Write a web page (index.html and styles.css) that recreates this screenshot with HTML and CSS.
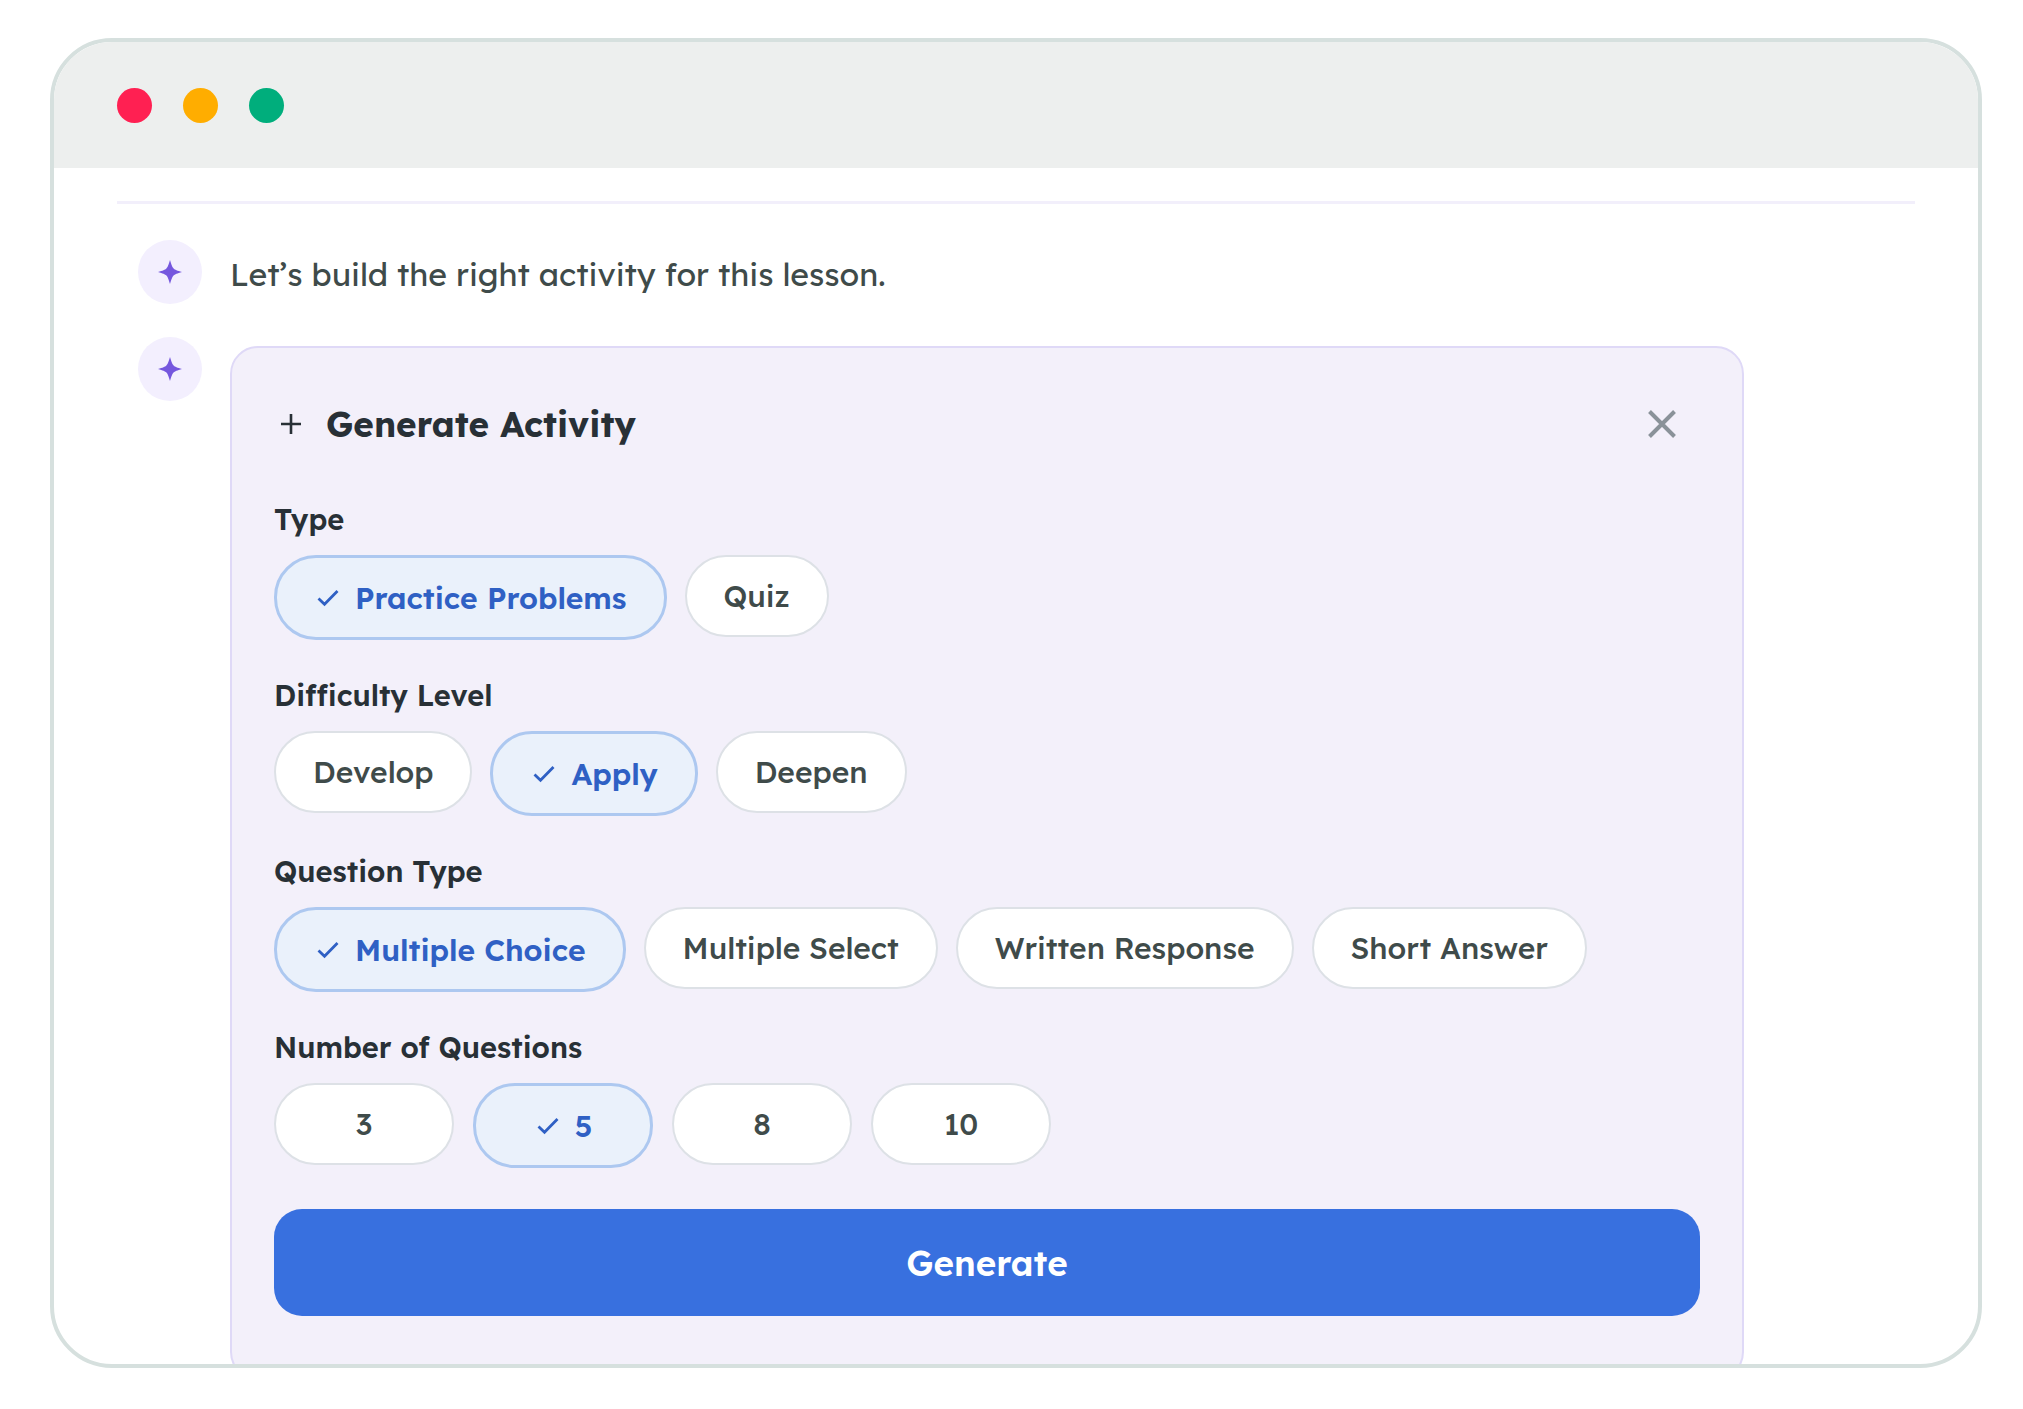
FILE: index.html
```
<!DOCTYPE html>
<html lang="en">
<head>
<meta charset="UTF-8">
<meta name="viewport" content="width=device-width, initial-scale=1">
<title>Generate Activity</title>
<link rel="stylesheet" href="styles.css">
</head>
<body>
<svg width="0" height="0" class="sprite" aria-hidden="true">
  <symbol id="spark" viewBox="0 0 22 22"><path d="M11 0C12.400 4.500 13 6.400 14.300 7.700C15.600 9 17.500 9.600 22 11C17.500 12.400 15.600 13 14.300 14.300C13 15.600 12.400 17.500 11 22C9.600 17.500 9 15.600 7.700 14.300C6.400 13 4.500 12.400 0 11C4.500 9.600 6.400 9 7.700 7.700C9 6.400 9.600 4.500 11 0Z" fill="currentColor"/></symbol>
  <symbol id="check" viewBox="0 0 22 18"><path d="M1.500 9.500L7.500 15.200L20.500 2" fill="none" stroke="currentColor" stroke-width="2.800"/></symbol>
</svg>

<div class="window">
  <div class="titlebar">
    <span class="dot red"></span>
    <span class="dot yellow"></span>
    <span class="dot green"></span>
  </div>

  <main class="chat">
    <div class="message">
      <span class="avatar"><svg class="spark"><use href="#spark"/></svg></span>
      <p class="text">Let’s build the right activity for this lesson.</p>
    </div>

    <div class="message">
      <span class="avatar"><svg class="spark"><use href="#spark"/></svg></span>
      <form class="card">
        <header class="card-head">
          <svg class="plus" viewBox="0 0 20 20" aria-hidden="true"><path d="M10 0V20M0 10H20" stroke="currentColor" stroke-width="2.600"/></svg>
          <h1>Generate Activity</h1>
          <button type="button" class="close" aria-label="Close"><svg viewBox="0 0 28 28"><path d="M1.500 1.500L26.500 26.500M26.500 1.500L1.500 26.500" stroke="currentColor" stroke-width="4"/></svg></button>
        </header>

        <div class="group" role="group" aria-labelledby="type">
          <h2 id="type">Type</h2>
          <div class="chips">
            <button type="button" class="chip on" aria-pressed="true"><svg class="check"><use href="#check"/></svg>Practice Problems</button>
            <button type="button" class="chip">Quiz</button>
          </div>
        </div>

        <div class="group" role="group" aria-labelledby="level">
          <h2 id="level">Difficulty Level</h2>
          <div class="chips">
            <button type="button" class="chip">Develop</button>
            <button type="button" class="chip on" aria-pressed="true"><svg class="check"><use href="#check"/></svg>Apply</button>
            <button type="button" class="chip">Deepen</button>
          </div>
        </div>

        <div class="group" role="group" aria-labelledby="qtype">
          <h2 id="qtype">Question Type</h2>
          <div class="chips">
            <button type="button" class="chip on" aria-pressed="true"><svg class="check"><use href="#check"/></svg>Multiple Choice</button>
            <button type="button" class="chip">Multiple Select</button>
            <button type="button" class="chip">Written Response</button>
            <button type="button" class="chip">Short Answer</button>
          </div>
        </div>

        <div class="group" role="group" aria-labelledby="count">
          <h2 id="count">Number of Questions</h2>
          <div class="chips count">
            <button type="button" class="chip">3</button>
            <button type="button" class="chip on" aria-pressed="true"><svg class="check"><use href="#check"/></svg>5</button>
            <button type="button" class="chip">8</button>
            <button type="button" class="chip">10</button>
          </div>
        </div>

        <button type="submit" class="generate">Generate</button>
      </form>
    </div>
  </main>
</div>
</body>
</html>
```

FILE: styles.css
```
* {box-sizing:border-box;}
body {margin:0; padding:38px 41px 41px 50px; background:#fff; color:#3f4b4a; font-family:Lexend, Inter, "Liberation Sans", sans-serif;}
h1, h2, p {margin:0;}
button {font:inherit; cursor:pointer;}
.sprite {position:absolute;}

.window {border:4px solid #d6e0de; border-radius:62px; overflow:hidden;}
.titlebar {display:flex; align-items:center; gap:31px; height:126px; padding:0 63px; background:#edefee;}
.dot {width:35px; height:35px; border-radius:50%;}
.red {background:#ff2052;}
.yellow {background:#ffad00;}
.green {background:#00ae7c;}

.chat {margin:33px 63px -16px; padding:36px 171px 0 21px; border-top:3px solid #f2effb;}
.message {display:flex; align-items:flex-start; gap:28px; margin-bottom:33px;}
.message:last-child {margin-bottom:0;}
.avatar {display:flex; align-items:center; justify-content:center; flex:none; width:64px; height:64px; border-radius:50%; background:#f3effe; color:#7557de;}
.spark {width:24px; height:24px;}
.text {padding-top:4px; font-size:32px; line-height:60px;}

.card {flex:1; margin-top:9px; padding:56px 42px 62px; border:2px solid #dfd9f7; border-radius:28px; background:#f3f0fa;}
.card-head {display:flex; align-items:center; height:40px; margin-bottom:60px; padding:0 24px 0 7px; color:#283036;}
.plus {width:20px; height:20px; margin-right:25px;}
h1 {flex:1; font-size:35px; line-height:40px; font-weight:700;}
.close {display:flex; padding:0; border:0; background:none; color:#8a9299;}
.close svg {width:28px; height:28px;}

.group {margin-bottom:40px;}
h2 {margin-bottom:21px; color:#283036; font-size:29px; line-height:30px; font-weight:600;}
.chips {display:flex; align-items:flex-start; gap:18px; height:85px;}
.chip {display:flex; align-items:center; justify-content:center; height:82px; padding:0 37px; border:2px solid #dde1e6; border-radius:41px; background:#fff; color:#3f4b4a; font-size:30px; font-weight:500; white-space:nowrap;}
.chip.on {height:85px; padding:0 37px 0 40px; border:3px solid #adc8f0; border-radius:42px; background:#eaf1fb; color:#2f60c4; font-weight:600;}
.check {width:22px; height:18px; margin-right:16px;}
.count .chip, .count .chip.on {width:180px;}
.count {gap:19px;}

.generate {display:block; width:100%; height:107px; margin-top:41px; border:0; border-radius:28px; background:#3870df; color:#fff; font-size:35px; font-weight:600;}
```
